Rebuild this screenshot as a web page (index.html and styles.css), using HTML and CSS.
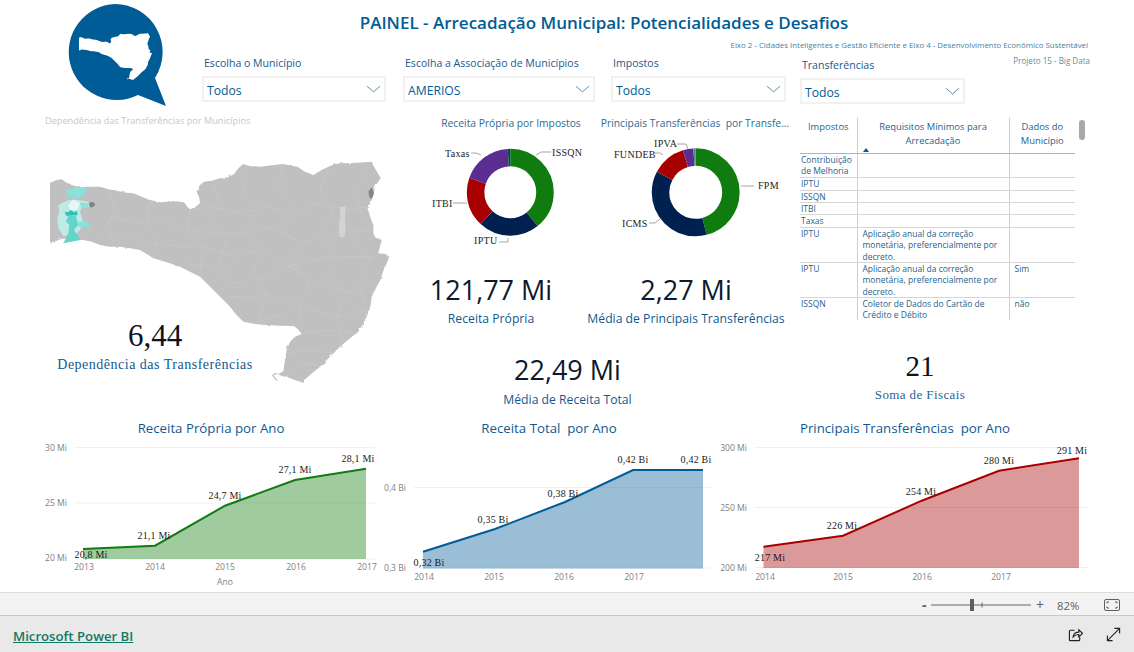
FILE: index.html
```html
<!DOCTYPE html>
<html lang="pt-BR">
<head>
<meta charset="utf-8">
<title>PAINEL - Arrecadação Municipal</title>
<link rel="stylesheet" href="styles.css">
</head>
<body>
<main class="report">
  <header class="header">
    <svg class="logo" viewBox="0 0 200 108" aria-label="Logo">
      <path class="logo-blue" d="M115 4a48 48 0 1 0 23 91l28 11-11-28A48 48 0 0 0 115 4z"/>
      <use href="#sc-shape" class="logo-map" transform="translate(68.2 30.8) scale(.0717 .0707)"/>
    </svg>
    <div class="head-main">
      <h1 class="title">PAINEL - Arrecadação Municipal: Potencialidades e Desafios</h1>
      <p class="subtitle">Eixo 2 - Cidades Inteligentes e Gestão Eficiente e Eixo 4 - Desenvolvimento Econômico Sustentável</p>
      <div class="filters">
        <div class="filter f1"><label class="filter-label">Escolha o Município</label><div class="select"><span>Todos</span><svg class="chev" viewBox="0 0 16 8"><path d="M1 1l7 6 7-6"/></svg></div></div>
        <div class="filter f2"><label class="filter-label">Escolha a Associação de Municípios</label><div class="select"><span>AMERIOS</span><svg class="chev" viewBox="0 0 16 8"><path d="M1 1l7 6 7-6"/></svg></div></div>
        <div class="filter f3"><label class="filter-label">Impostos</label><div class="select"><span>Todos</span><svg class="chev" viewBox="0 0 16 8"><path d="M1 1l7 6 7-6"/></svg></div></div>
        <div class="filter f4"><label class="filter-label">Transferências</label><div class="select"><span>Todos</span><svg class="chev" viewBox="0 0 16 8"><path d="M1 1l7 6 7-6"/></svg></div></div>
        <span class="project">Projeto 15 - Big Data</span>
      </div>
    </div>
  </header>

  <section class="middle">
    <div class="col-map">
      <p class="map-caption">Dependência das Transferências por Municípios</p>
      <svg class="map" viewBox="0 0 1200 750">
        <defs>
          <path id="sc-shape" d="M150 98L170 90 185 88 200 98 215 105 240 112 260 110 300 110 325 118 350 122 380 128 400 130 425 140 450 150 480 157 500 155 530 154 552 157 562 170 570 178 585 172 600 160 598 145 590 125 600 105 612 95 635 92 660 85 685 82 702 72 715 55 730 42 745 47 780 50 815 46 850 42 875 47 892 50 915 65 940 75 965 60 985 50 1005 42 1030 40 1075 38 1115 35 1122 50 1135 72 1142 85 1128 105 1122 125 1115 150 1108 165 1105 182 1112 205 1120 225 1120 250 1125 262 1145 270 1140 290 1135 310 1155 312 1168 320 1158 345 1150 362 1140 392 1130 410 1115 440 1112 465 1105 490 1090 520 1075 545 1050 565 1020 590 990 620 960 650 930 675 905 697 885 690 868 684 845 678 825 668 816 676 826 690 835 695 820 675 835 672 850 664 855 630 860 600 870 575 885 560 905 552 892 535 880 528 840 527 800 525 765 522 730 515 705 490 690 470 665 445 640 420 620 400 600 380 570 365 540 350 500 337 460 325 440 312 420 300 390 295 360 290 330 290 300 285 275 275 250 270 220 268 190 265 170 272 150 278Z"/>
          <filter id="rough" x="-2%" y="-2%" width="104%" height="104%">
            <feTurbulence type="fractalNoise" baseFrequency=".06" numOctaves="2" seed="4"/>
            <feDisplacementMap in="SourceGraphic" scale="7"/>
          </filter>
        </defs>
        <g filter="url(#rough)">
          <use href="#sc-shape" class="map-land"/>
          <path class="map-lines" d="M330 125L345 180 320 230 345 290M450 155L440 220 470 270 460 325M570 180L560 240 610 290 600 380M640 95L660 160 625 215 680 270 660 330 700 400M740 60L730 130 770 190 735 250 790 300 760 360 800 430 770 520M850 45L835 110 880 170 850 240 900 280 870 350 930 400 900 470 905 550M990 50L960 120 1000 180 960 250 1010 310 980 380 1040 430 1010 500 1030 580M1100 60L1060 130 1090 200 1050 270 1110 320 1080 400 1100 490M570 180L640 170 720 190 800 170 880 190 960 160 1050 180 1105 170M330 200L420 220 500 215 570 240 650 250 735 250 820 230 900 280 1000 250 1120 240M300 270L370 255 450 280 540 290 610 290 700 320 790 300 870 350 980 320 1135 320M560 340L640 350 700 400 790 380 870 350 960 400 1040 430 1130 400M680 440L760 440 800 430 900 470 1010 500 1100 480M760 520L850 490 905 550 1000 540 1070 550M860 610L930 600 1000 610M880 660L930 640 960 650"/>
        </g>
        <path class="map-strip" d="M1020 170h17l-2 35 2 30-4 26h-14l-3-30 4-30z"/>
        <path class="map-dark" d="M1105 125l10-13 7 18-7 18-7-8zM270 156h10l6 8-7 8h-8l-4-8z"/>
        <path class="t-mid" d="M175 165L205 150 235 150 265 155 267 170 245 175 240 185 250 215 240 240 225 255 190 258 175 235 172 205 178 185Z"/>
        <path class="t-light" d="M195 118L225 114 260 110 258 125 240 145 225 145 205 140ZM235 215L265 213 270 230 245 233 235 228ZM240 158L268 160 262 172 244 174Z"/>
        <path class="t-pale" d="M205 165L220 148 240 160 232 180 210 180Z"/>
        <path class="t-soft" d="M205 197L228 197 234 225 222 240 242 270 190 280 205 250 208 225 198 215Z"/>
        <path class="t-strong" d="M195 185L205 187 212 180 222 187 232 183 232 196 198 197Z"/>
      </svg>
      <div class="kpi-map">
        <div class="kpi-map-value">6,44</div>
        <div class="kpi-map-label">Dependência das Transferências</div>
      </div>
    </div>

    <div class="col-mid">
      <div class="donuts">
        <svg class="donut" viewBox="395 115 192 150">
          <text class="donut-title" x="511" y="127">Receita Própria por Impostos</text>
          <g class="ring" transform="rotate(-90 510.3 192.3)">
            <circle class="s-green" cx="510.3" cy="192.3" r="34.7" pathLength="360" stroke-dasharray="141 360"/>
            <circle class="s-navy" cx="510.3" cy="192.3" r="34.7" pathLength="360" stroke-dasharray="82 360" stroke-dashoffset="-141"/>
            <circle class="s-red" cx="510.3" cy="192.3" r="34.7" pathLength="360" stroke-dasharray="66.5 360" stroke-dashoffset="-223"/>
            <circle class="s-purple" cx="510.3" cy="192.3" r="34.7" pathLength="360" stroke-dasharray="67 360" stroke-dashoffset="-289.5"/>
            <circle class="s-teal" cx="510.3" cy="192.3" r="34.7" pathLength="360" stroke-dasharray="3.5 360" stroke-dashoffset="-356.5"/>
          </g>
          <path class="leader" d="M536 155l5-3h10M481 155l-5-2h-5M453 203h14M508 238v4h-9"/>
          <text class="lbl" x="552" y="156">ISSQN</text>
          <text class="lbl" x="445" y="157">Taxas</text>
          <text class="lbl" x="432" y="207">ITBI</text>
          <text class="lbl" x="474" y="244">IPTU</text>
        </svg>
        <svg class="donut" viewBox="587 115 198 150">
          <text class="donut-title" x="695" y="127">Principais Transferências  por Transfe...</text>
          <g class="ring" transform="rotate(-90 695.7 192.3)">
            <circle class="s-green" cx="695.7" cy="192.3" r="35.2" pathLength="360" stroke-dasharray="165.5 360"/>
            <circle class="s-navy" cx="695.7" cy="192.3" r="35.2" pathLength="360" stroke-dasharray="132.5 360" stroke-dashoffset="-165.5"/>
            <circle class="s-red" cx="695.7" cy="192.3" r="35.2" pathLength="360" stroke-dasharray="45 360" stroke-dashoffset="-298"/>
            <circle class="s-purple" cx="695.7" cy="192.3" r="35.2" pathLength="360" stroke-dasharray="14 360" stroke-dashoffset="-343"/>
            <circle class="s-grey" cx="695.7" cy="192.3" r="35.2" pathLength="360" stroke-dasharray="3 360" stroke-dashoffset="-357"/>
          </g>
          <path class="leader" d="M741 186h13M660 219l-5 4h-6M663 155l-3-2h-7M688 149l-2-5h-9"/>
          <text class="lbl" x="758" y="189">FPM</text>
          <text class="lbl" x="622" y="227">ICMS</text>
          <text class="lbl" x="614" y="158">FUNDEB</text>
          <text class="lbl" x="654" y="147">IPVA</text>
        </svg>
      </div>
      <div class="kpi-row">
        <div class="kpi"><div class="kpi-value">121,77 Mi</div><div class="kpi-label">Receita Própria</div></div>
        <div class="kpi"><div class="kpi-value">2,27 Mi</div><div class="kpi-label">Média de Principais Transferências</div></div>
      </div>
      <div class="kpi kpi-total"><div class="kpi-value">22,49 Mi</div><div class="kpi-label">Média de Receita Total</div></div>
    </div>

    <div class="col-table">
      <div class="table-wrap">
        <table class="req">
          <colgroup><col class="c1"><col class="c2"><col class="c3"></colgroup>
          <thead>
            <tr><th>Impostos</th><th>Requisitos Mínimos para Arrecadação<i class="sort"></i></th><th>Dados do Município</th></tr>
          </thead>
          <tbody>
            <tr class="r24"><td>Contribuição de Melhoria</td><td></td><td></td></tr>
            <tr class="r13"><td>IPTU</td><td></td><td></td></tr>
            <tr class="r12"><td>ISSQN</td><td></td><td></td></tr>
            <tr class="r12"><td>ITBI</td><td></td><td></td></tr>
            <tr class="r13"><td>Taxas</td><td></td><td></td></tr>
            <tr class="r35"><td>IPTU</td><td>Aplicação anual da correção monetária, preferencialmente por decreto.</td><td></td></tr>
            <tr class="r35"><td>IPTU</td><td>Aplicação anual da correção monetária, preferencialmente por decreto.</td><td>Sim</td></tr>
            <tr class="r35"><td>ISSQN</td><td>Coletor de Dados do Cartão de Crédito e Débito</td><td>não</td></tr>
          </tbody>
        </table>
        <i class="thumb"></i>
      </div>
      <div class="kpi kpi-fiscais"><div class="kpi-value kpi-serif">21</div><div class="kpi-label kpi-serif-label">Soma de Fiscais</div></div>
    </div>
  </section>

  <section class="charts">
    <svg class="chart c-one" viewBox="0 415 380 177">
      <text class="chart-title" x="211" y="433">Receita Própria por Ano</text>
      <path class="grid" d="M75 447.5H375M75 503H375M75 559H375"/>
      <text class="ax ax-end" x="67" y="451">30 Mi</text><text class="ax ax-end" x="67" y="506">25 Mi</text><text class="ax ax-end" x="67" y="561">20 Mi</text>
      <path class="area green" d="M83 549L155 545.700 225 505.700 295 480 366 468.700V559H83Z"/>
      <path class="line line-green" d="M83 549L155 545.700 225 505.700 295 480 366 468.700"/>
      <text class="ax ax-mid" x="84" y="570">2013</text><text class="ax ax-mid" x="155" y="570">2014</text><text class="ax ax-mid" x="225" y="570">2015</text><text class="ax ax-mid" x="296" y="570">2016</text><text class="ax ax-mid" x="367" y="570">2017</text>
      <text class="ax ax-mid" x="225" y="585">Ano</text>
      <text class="val" x="91" y="558">20,8 Mi</text><text class="val" x="154" y="539">21,1 Mi</text><text class="val" x="225" y="499">24,7 Mi</text><text class="val" x="295" y="473">27,1 Mi</text><text class="val" x="358" y="462">28,1 Mi</text>
    </svg>
    <svg class="chart c-two" viewBox="380 415 360 177">
      <text class="chart-title" x="549" y="433">Receita Total  por Ano</text>
      <path class="grid" d="M414 487.500H711M414 568H711"/>
      <text class="ax ax-end" x="406" y="491">0,4 Bi</text><text class="ax ax-end" x="406" y="571">0,3 Bi</text>
      <path class="area blue" d="M423 551.700L495 529 565 502 633 470 703 470V568.500H423Z"/>
      <path class="line line-blue" d="M423 551.700L495 529 565 502 633 470 703 470"/>
      <text class="ax ax-mid" x="424" y="580">2014</text><text class="ax ax-mid" x="494" y="580">2015</text><text class="ax ax-mid" x="564" y="580">2016</text><text class="ax ax-mid" x="634" y="580">2017</text>
      <text class="val" x="429" y="566">0,32 Bi</text><text class="val" x="493" y="523">0,35 Bi</text><text class="val" x="563" y="497">0,38 Bi</text><text class="val" x="633" y="463">0,42 Bi</text><text class="val" x="696" y="463">0,42 Bi</text>
    </svg>
    <svg class="chart c-three" viewBox="740 415 394 177">
      <text class="chart-title" x="905" y="433">Principais Transferências  por Ano</text>
      <path class="grid" d="M755 447.500H1088M755 507.500H1088M755 567.500H1088"/>
      <text class="ax ax-end" x="747" y="451">300 Mi</text><text class="ax ax-end" x="747" y="511">250 Mi</text><text class="ax ax-end" x="747" y="571">200 Mi</text>
      <path class="area red" d="M763.500 546.700L843 535.700 921.700 500.700 999 470.700 1079 458.300V568H763.500Z"/>
      <path class="line line-red" d="M763.500 546.700L843 535.700 921.700 500.700 999 470.700 1079 458.300"/>
      <text class="ax ax-mid" x="765" y="580">2014</text><text class="ax ax-mid" x="843" y="580">2015</text><text class="ax ax-mid" x="922" y="580">2016</text><text class="ax ax-mid" x="1001" y="580">2017</text>
      <text class="val" x="770" y="561">217 Mi</text><text class="val" x="842" y="529">226 Mi</text><text class="val" x="921" y="495">254 Mi</text><text class="val" x="999" y="464">280 Mi</text><text class="val" x="1072" y="454">291 Mi</text>
    </svg>
  </section>
</main>

<div class="zoombar">
  <span class="zoom-minus">-</span>
  <svg class="zoom-slider" viewBox="0 0 102 14"><path class="track" d="M0 7h100M51 4.500v5"/><rect class="knob" x="39" y="1" width="4" height="12"/></svg>
  <span class="zoom-plus">+</span>
  <span class="zoom-val">82%</span>
  <svg class="fit" viewBox="0 0 16 12"><rect x=".5" y=".5" width="15" height="11" rx="1.500"/><path d="M3 4.500V3h2M11 3h2v1.500M13 7.500V9h-2M5 9H3V7.500"/></svg>
</div>
<footer class="footer">
  <a class="pbi-link" href="#">Microsoft Power BI</a>
  <div class="foot-icons">
    <svg class="ficon" viewBox="0 0 16 16"><path d="M7 3.500H2.500a1 1 0 0 0-1 1v9a1 1 0 0 0 1 1h9a1 1 0 0 0 1-1V11"/><path d="M5.500 10.500c.5-3 3-5 6-5V3l4 3.800-4 3.700V8c-2.500 0-4.500.8-6 2.500z"/></svg>
    <svg class="ficon" viewBox="0 0 16 16"><path d="M1.500 14.500l13-13M9 1.500h5.500V7M1.500 9v5.500H7"/></svg>
  </div>
</footer>
</body>
</html>
```

FILE: styles.css
```css
* { box-sizing: border-box; }
html, body { margin: 0; padding: 0; }
body {
  width: 1134px;
  height: 652px;
  overflow: hidden;
  background: #fff;
  font-family: "Open Sans", "Noto Sans", sans-serif;
  color: #005c96;
  display: flex;
  flex-direction: column;
}
.report { height: 592px; display: flex; flex-direction: column; }

/* header */
.header { height: 108px; display: flex; }
.logo { width: 200px; height: 108px; flex: none; overflow: visible; }
.logo-blue { fill: #005c96; }
.logo-map { fill: #fff; }
.head-main { flex: 1; min-width: 0; }
.title {
  margin: 0;
  padding-top: 11px;
  height: 38px;
  padding-right: 126px;
  text-align: center;
  font-size: 17px;
  line-height: 24px;
  font-weight: 600;
  color: #005c96;
  white-space: nowrap;
}
.subtitle {
  margin: 0;
  height: 15px;
  padding-top: 1px;
  padding-right: 46px;
  text-align: right;
  font-size: 7.880px;
  line-height: 12px;
  color: #4a7f9f;
  white-space: nowrap;
}
.filters { display: flex; padding-left: 2px; padding-right: 44px; }
.filter { flex: none; }
.f1 { width: 184px; margin-right: 17px; }
.f2 { width: 192px; margin-right: 16px; }
.f3 { width: 175px; margin-right: 14px; }
.f4 { width: 165px; margin-top: 2px; }
.filter-label {
  display: block;
  height: 23px;
  padding: 3px 0 0 2px;
  font-size: 10.550px;
  line-height: 14px;
  color: #20588a;
  white-space: nowrap;
}
.select {
  height: 26px;
  border: 2px solid #f1f1f1;
  display: flex;
  align-items: center;
  justify-content: space-between;
  padding: 2px 2px 0 3px;
  font-size: 12.200px;
  color: #005c96;
}
.chev { width: 15px; height: 8px; margin-right: 1px; margin-bottom: 2px; fill: none; stroke: #4d8db5; stroke-width: 1; }
.project {
  margin-left: auto;
  padding-top: 2px;
  font-size: 8.050px;
  line-height: 12px;
  color: #6b8aa0;
  white-space: nowrap;
}

/* middle */
.middle { height: 307px; display: flex; }
.col-map { width: 395px; flex: none; position: relative; }
.map-caption {
  margin: 0;
  height: 42px;
  padding: 6px 0 0 45px;
  font-size: 9.200px;
  line-height: 13px;
  color: #c8c8c8;
  white-space: nowrap;
}
.map { display: block; width: 400px; height: 250px; }
.map-land { fill: #c0c0c0; }
.map-lines { fill: none; stroke: #cbcbcb; stroke-width: 1.500; }
.map-strip { fill: #d3d3d3; }
.map-dark { fill: #858585; }
.t-mid { fill: #bfeae6; }
.t-light { fill: #8be0d8; }
.t-pale { fill: #e6f8f6; }
.t-soft { fill: #62d4ca; }
.t-strong { fill: #2fc1b4; }
.kpi-map { position: absolute; left: 40px; top: 211px; width: 230px; text-align: center; }
.kpi-map-value {
  font-family: "Liberation Serif", serif;
  font-size: 31px;
  line-height: 34px;
  color: #0b1420;
}
.kpi-map-label {
  font-family: "Liberation Serif", serif;
  font-size: 14px;
  line-height: 20px;
  margin-top: 2px;
  letter-spacing: .5px;
  color: #11598f;
  white-space: nowrap;
}

.col-mid { width: 405px; flex: none; }
.donuts { display: flex; height: 157px; margin-top: 7px; }
.donut { display: block; height: 150px; overflow: visible; flex: none; }
.donut:first-child { width: 192px; }
.donut:last-child { width: 198px; }
.donut-title { font-size: 10.300px; fill: #2f6a92; text-anchor: middle; white-space: pre; }
.ring circle { fill: none; stroke-width: 17.500; }
.s-green { stroke: #107c10; }
.s-navy { stroke: #002050; }
.s-red { stroke: #a80000; }
.s-purple { stroke: #5c2d91; }
.s-teal { stroke: #004b50; }
.s-grey { stroke: #5f7f9a; }
.leader { fill: none; stroke: #a6a6a6; stroke-width: 1; }
.lbl { font-family: "Liberation Serif", serif; font-size: 10px; fill: #222; letter-spacing: .3px; }

.kpi-row { display: flex; width: 390px; }
.kpi-row .kpi:first-child { width: 192px; }
.kpi-row .kpi:last-child { width: 198px; }
.kpi { text-align: center; }
.kpi-value { font-size: 27px; line-height: 36px; color: #0b1a2f; white-space: nowrap; }
.kpi-label { font-size: 12.200px; line-height: 18px; margin-top: 2px; color: #11598f; white-space: nowrap; }
.kpi-total { width: 345px; margin-top: 24px; }
.kpi-total .kpi-label { margin-top: 3px; }
.col-table { flex: 1; min-width: 0; }
.table-wrap {
  position: relative;
  width: 290px;
  height: 202px;
  margin-top: 10px;
  overflow: hidden;
}
.req {
  width: 275px;
  border-collapse: collapse;
  table-layout: fixed;
  font-size: 8.500px;
  line-height: 11.300px;
  color: #1f5f8b;
}
.c1 { width: 57px; }
.c2 { width: 152px; }
.c3 { width: 66px; }
.req th {
  position: relative;
  height: 35px;
  padding: 2px 6px 0;
  font-weight: 400;
  font-size: 9.400px;
  line-height: 14px;
  text-align: center;
  vertical-align: top;
  border-bottom: 1px solid #9fb6c6;
}
.req th + th, .req td + td { border-left: 1px solid #cfcfcf; }
.req td { padding: 0 0 0 1px; vertical-align: top; border-bottom: 1px solid #d6d6d6; overflow: hidden; }
.req td + td { padding-left: 5px; }
.r24 { height: 24px; }
.r13 { height: 13px; }
.r12 { height: 12px; }
.r35 { height: 35px; }
.sort {
  position: absolute;
  left: 5px;
  bottom: 1px;
  width: 0;
  height: 0;
  border-left: 3.500px solid transparent;
  border-right: 3.500px solid transparent;
  border-bottom: 4px solid #005c96;
}
.thumb {
  position: absolute;
  left: 279px;
  top: 2px;
  width: 6px;
  height: 20px;
  border-radius: 3px;
  background: #a8a8a8;
}
.kpi-fiscais { width: 240px; margin-top: 28px; }
.kpi-serif { font-family: "Liberation Serif", serif; font-size: 29px; color: #0b1420; }
.kpi-serif-label { font-family: "Liberation Serif", serif; font-size: 13px; font-weight: 400; letter-spacing: .4px; margin-top: 2px; color: #1f6596; }

/* charts */
.charts { height: 177px; display: flex; }
.chart { display: block; height: 177px; flex: none; overflow: visible; }
.c-one { width: 380px; }
.c-two { width: 360px; }
.c-three { width: 394px; }
.chart-title { font-size: 13.250px; fill: #11598f; text-anchor: middle; white-space: pre; }
.grid { stroke: #f1f1f1; stroke-width: 1; fill: none; }
.ax { font-size: 8.600px; fill: #808080; }
.ax-end { text-anchor: end; }
.ax-mid { text-anchor: middle; }
.area { opacity: .4; }
.green { fill: #107c10; }
.blue { fill: #005c96; }
.red { fill: #a80000; }
.line { fill: none; stroke-width: 2; }
.line-green { stroke: #107c10; }
.line-blue { stroke: #005c96; }
.line-red { stroke: #a80000; }
.val { font-family: "Liberation Serif", serif; font-size: 10px; fill: #1a1a1a; text-anchor: middle; letter-spacing: .2px; }

/* bottom bars */
.zoombar {
  height: 24px;
  flex: none;
  display: flex;
  align-items: center;
  justify-content: flex-end;
  background: #f3f3f3;
  border-top: 1px solid #dcdcdc;
  border-bottom: 1px solid #c8c8c8;
  padding: 2px 14px 0 0;
  color: #606060;
}
.zoom-minus { font-size: 14px; font-weight: 700; width: 9px; line-height: 14px; }
.zoom-slider { width: 102px; height: 14px; }
.track { fill: none; stroke: #666; stroke-width: 1; }
.knob { fill: #606060; }
.zoom-plus { font-size: 14px; width: 10px; margin-left: 3px; line-height: 14px; }
.zoom-val { font-size: 11.300px; margin-left: 11px; width: 47px; }
.fit { width: 16px; height: 12px; fill: none; stroke: #606060; stroke-width: 1; }
.footer {
  flex: 1;
  display: flex;
  align-items: center;
  justify-content: space-between;
  background: #e9e9e9;
  padding: 3px 13px 0;
}
.pbi-link { font-size: 13.200px; font-weight: 600; color: #117865; }
.foot-icons { display: flex; gap: 23px; margin-top: -3px; }
.ficon { width: 15px; height: 15px; fill: none; stroke: #222; stroke-width: 1.200; }
```
